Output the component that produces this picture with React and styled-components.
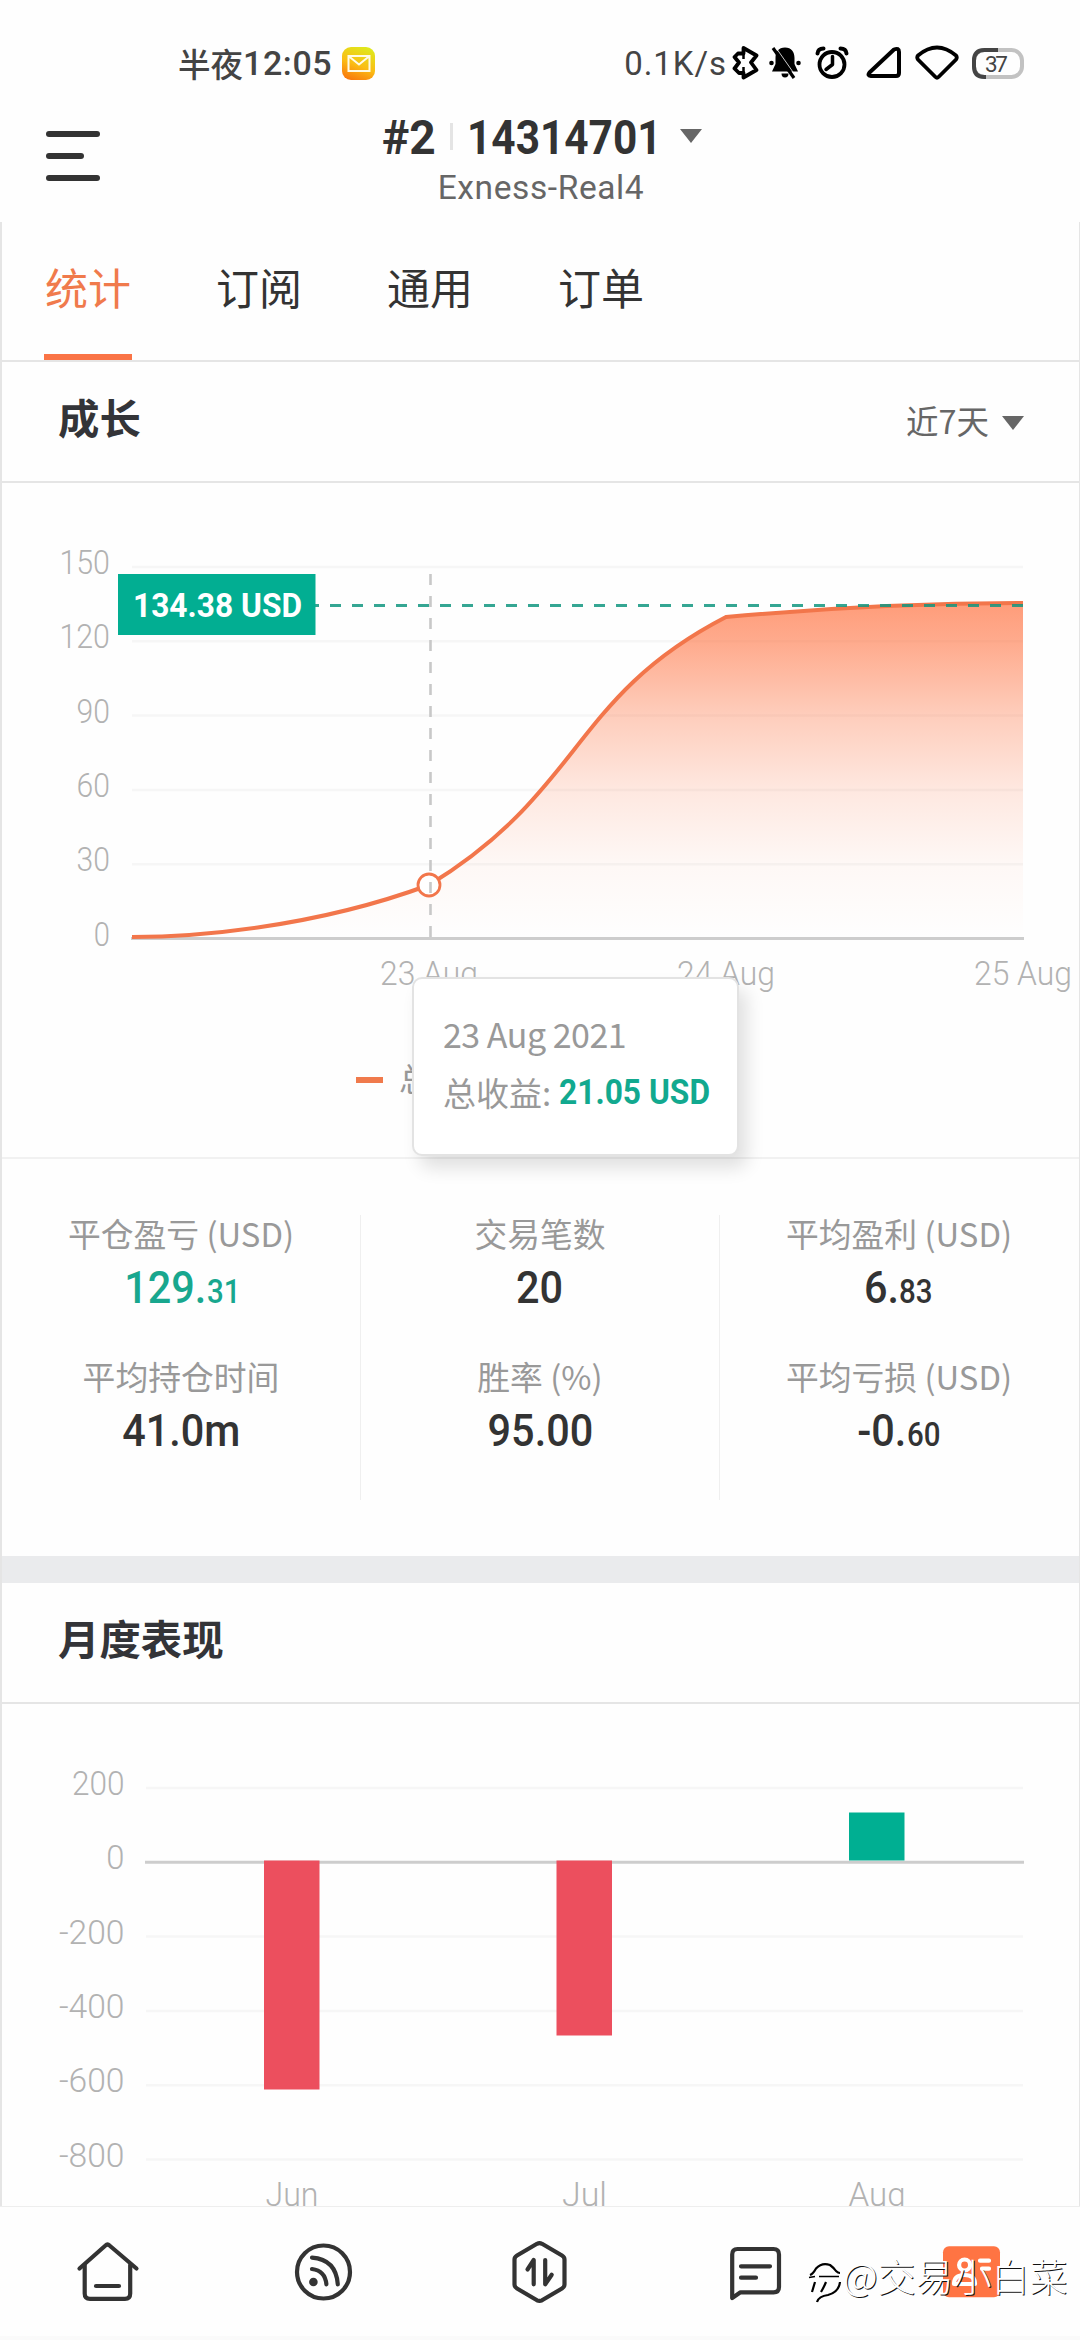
import React from "react";
import styled, { createGlobalStyle } from "styled-components";

const GlobalStyle = createGlobalStyle`
  * {
    box-sizing: border-box;
  }
  body {
    margin: 0;
    background: #fefefe;
    color: #333;
    font-family: Roboto, "Noto Sans CJK SC", sans-serif;
  }
`;

const Screen = styled.div`
  position: relative;
  width: 1080px;
  height: 2340px;
  display: flex;
  flex-direction: column;
  overflow: hidden;
  background: #fefefe;
`;

/* DIN-like look: Roboto squeezed horizontally */
const Din = styled.span`
  display: inline-block;
  white-space: nowrap;
  width: ${(p) => (p.$width ? `${p.$width}px` : "auto")};
  color: ${(p) => p.$color || "inherit"};
  font-family: Roboto, sans-serif;
  font-size: ${(p) => p.$size}px;
  font-weight: ${(p) => p.$weight || 400};
  letter-spacing: ${(p) => p.$spacing || 0}px;
`;

const DinGlyphs = styled.span`
  display: inline-block;
  transform: scaleX(${(p) => p.$squeeze});
  transform-origin: ${(p) => p.$origin};
`;

function Number({ children, squeeze = 1, origin = "center", ...rest }) {
  return (
    <Din {...rest}>
      <DinGlyphs $squeeze={squeeze} $origin={origin}>
        {children}
      </DinGlyphs>
    </Din>
  );
}

const StatusBar = styled.div`
  height: 126px;
  padding: 0 55px 0 178px;
  display: flex;
  align-items: center;
  flex-shrink: 0;
`;

const Clock = styled.div`
  display: flex;
  align-items: center;
  font-family: "Noto Sans CJK SC", sans-serif;
  font-size: 32.5px;
  font-weight: 500;
  line-height: 40px;
  color: #444;
  margin-right: 10px;
`;

const StatusIcons = styled.div`
  display: flex;
  align-items: center;
  margin-left: auto;
`;

const StatusIcon = styled.svg`
  display: block;
  margin-left: ${(p) => p.$gap || 0}px;
`;

const Header = styled.header`
  height: 96px;
  display: grid;
  grid-template-columns: 200px 1fr 200px;
  flex-shrink: 0;
`;

const MenuButton = styled.div`
  display: flex;
  flex-direction: column;
  gap: 16px;
  padding: 5px 0 0 46px;
`;

const MenuLine = styled.div`
  width: ${(p) => p.$width}px;
  height: 6px;
  border-radius: 3px;
  background: #333;
`;

const Account = styled.div`
  display: flex;
  flex-direction: column;
  align-items: center;
`;

const AccountTitle = styled.div`
  display: flex;
  align-items: center;
  align-self: stretch;
  height: 46px;
  margin-top: -12px;
  padding-left: 182px;
`;

const Divider = styled.div`
  width: 3px;
  height: 27px;
  margin: 0 14px 2px 12px;
  background: #e4e4e4;
`;

const Caret = styled.div`
  width: 0;
  height: 0;
  margin-left: ${(p) => p.$gap}px;
  margin-top: ${(p) => p.$drop || 0}px;
  border: 11px solid transparent;
  border-top: 14px solid #666;
  border-bottom: none;
`;

const Server = styled.div`
  height: 46px;
  line-height: 46px;
  margin-top: 5px;
  padding-left: 2px;
  color: #666;
`;

const Panel = styled.main`
  height: 1984px;
  flex-shrink: 0;
  border-left: 2px solid #e5e5e5;
  border-right: 1px solid #e5e5e5;
  overflow: hidden;
`;

const Tabs = styled.nav`
  height: 140px;
  display: flex;
  gap: 83px;
  padding-left: 42px;
  border-bottom: 2px solid #e5e5e5;
`;

const Tab = styled.div`
  height: 138px;
  width: 88px;
  text-align: center;
  line-height: 128px;
  font-size: 43px;
  font-family: "Noto Sans CJK SC", sans-serif;
  color: ${(p) => (p.$active ? "#f07a4c" : "#333")};
  border-bottom: 6px solid ${(p) => (p.$active ? "#fa7446" : "transparent")};
`;

const SectionHeader = styled.div`
  height: 121px;
  display: flex;
  justify-content: space-between;
  align-items: center;
  padding: 0 55px 0 56px;
  border-bottom: 2px solid #e5e5e5;
`;

const SectionTitle = styled.h2`
  margin: 0 0 12px;
  font-family: "Noto Sans CJK SC", sans-serif;
  font-size: 41.4px;
  line-height: 50px;
  font-weight: 700;
  color: #333438;
`;

const RangeSelect = styled.div`
  display: flex;
  align-items: center;
  margin-bottom: 4px;
  font-family: "Noto Sans CJK SC", sans-serif;
  font-size: 32.5px;
  line-height: 40px;
  color: #666;
`;

const ChartSvg = styled.svg`
  display: block;
`;

const AxisText = styled.text`
  font-family: Roboto, sans-serif;
  font-weight: ${(p) => p.$weight || 300};
  font-size: 33.5px;
  fill: ${(p) => p.$color || "#b2b2b2"};
`;

const Legend = styled.div`
  height: 149px;
  display: flex;
  align-items: flex-start;
  gap: 16px;
  padding: 49px 0 0 354px;
  border-bottom: 2px solid #f1f1f1;
  font-family: "Noto Sans CJK SC", sans-serif;
  font-size: 32px;
  line-height: 36px;
  color: #999;
`;

const LegendMark = styled.div`
  width: 27px;
  height: 6px;
  margin-top: 18px;
  background: #f07a4c;
`;

const Tooltip = styled.div`
  position: absolute;
  left: 412px;
  top: 977px;
  width: 327px;
  height: 179px;
  padding: 30px 0 0 29px;
  border: 2px solid #e3e3e3;
  border-radius: 10px;
  background: #fff;
  box-shadow: 8px 12px 18px rgba(0, 0, 0, 0.12);
  font-family: "Noto Sans CJK SC", sans-serif;
  color: #999;
`;

const TooltipRow = styled.div`
  display: flex;
  align-items: center;
  white-space: nowrap;
  height: 50px;
  line-height: 50px;
  margin-bottom: 8px;
  font-size: ${(p) => p.$size || 33}px;
  letter-spacing: ${(p) => p.$spacing || 0}px;
`;

const Stats = styled.section`
  height: 397px;
  padding-top: 56px;
  display: grid;
  grid-template-columns: repeat(3, 1fr);
`;

const StatColumn = styled.div`
  height: 285px;
  border-right: 1px solid ${(p) => (p.$last ? "transparent" : "#efefef")};
`;

const Stat = styled.div`
  height: 143px;
  text-align: center;
`;

const StatLabel = styled.div`
  font-family: "Noto Sans CJK SC", sans-serif;
  font-size: 32.8px;
  line-height: 36px;
  color: #999;
`;

const StatValue = styled.div`
  display: flex;
  justify-content: center;
  align-items: baseline;
  margin-top: 15px;
  height: 44px;
  line-height: 44px;
  color: ${(p) => (p.$profit ? "#18a78e" : "#333")};
`;

const Band = styled.div`
  height: 27px;
  background: #eaebed;
`;

const BottomNav = styled.footer`
  height: 134px;
  flex-shrink: 0;
  display: grid;
  grid-template-columns: repeat(5, 216px);
  align-items: center;
  justify-items: center;
  border-top: 1px solid #eee;
  border-bottom: 4px solid #fafafa;
`;

const NavIcon = styled.svg`
  display: block;
  fill: none;
  stroke: #333;
  stroke-width: 4.2;
  stroke-linecap: round;
  stroke-linejoin: round;
`;

const Watermark = styled.div`
  position: absolute;
  left: 805px;
  top: 2249px;
  display: flex;
  align-items: center;
  height: 50px;
  white-space: nowrap;
  font-family: "Noto Sans CJK SC", sans-serif;
  font-size: 38px;
  font-weight: 300;
  color: #fff;
  text-shadow: 1px 1px 0 #111;
`;

const WatermarkLogo = styled.svg`
  overflow: visible;
  fill: none;
  stroke: #000;
`;

const tabs = ["统计", "订阅", "通用", "订单"];

const stats = [
  [
    { label: "平仓盈亏 (USD)", value: "129.", decimals: "31", profit: true },
    { label: "平均持仓时间", value: "41.0m" },
  ],
  [
    { label: "交易笔数", value: "20" },
    { label: "胜率 (%)", value: "95.00" },
  ],
  [
    { label: "平均盈利 (USD)", value: "6.", decimals: "83" },
    { label: "平均亏损 (USD)", value: "-0.", decimals: "60" },
  ],
];

const growthTicks = [150, 120, 90, 60, 30, 0];
const growthDates = [
  { x: 429, label: "23 Aug" },
  { x: 726, label: "24 Aug" },
  { x: 1023, label: "25 Aug" },
];

const monthTicks = [200, 0, -200, -400, -600, -800];
const months = [
  { x: 292, label: "Jun", width: 51, top: 1861, bottom: 2090, color: "#ec4f5e" },
  { x: 584.5, label: "Jul", width: 43, top: 1861, bottom: 2036, color: "#ec4f5e" },
  { x: 877, label: "Aug", width: 55, top: 1813, bottom: 1861, color: "#00af92" },
];

const curve =
  "M132 937C190 937 310 929 429 885C584 790 571 697 726 617C825 608 925 603 1023 603";

function tickWidth(value) {
  const digits = String(Math.abs(value)).length;
  return digits * 17.2 - 1 + (value < 0 ? 13 : 0);
}

function GrowthChart() {
  return (
    <ChartSvg width="1077" height="527" viewBox="2 483 1077 527">
      <defs>
        <linearGradient id="area" x1="0" y1="603" x2="0" y2="938" gradientUnits="userSpaceOnUse">
          <stop offset="0" stopColor="#ff7443" stopOpacity="0.71" />
          <stop offset="0.12" stopColor="#ff7443" stopOpacity="0.6" />
          <stop offset="0.33" stopColor="#ff7443" stopOpacity="0.36" />
          <stop offset="0.56" stopColor="#ff7443" stopOpacity="0.16" />
          <stop offset="0.78" stopColor="#ff7443" stopOpacity="0.045" />
          <stop offset="1" stopColor="#ff7443" stopOpacity="0" />
        </linearGradient>
      </defs>
      {growthTicks.map((tick, i) => {
        const y = 567 + i * 74.3;
        return (
          <g key={tick}>
            <path
              d={`M${tick ? 132 : 131} ${y}H${tick ? 1023 : 1024}`}
              stroke={tick ? "#f6f6f6" : "#cdcdcd"}
              strokeWidth={tick ? 2.5 : 3}
            />
            <AxisText
              x="110"
              y={y + 7}
              textAnchor="end"
              textLength={tickWidth(tick)}
              lengthAdjust="spacingAndGlyphs"
            >
              {tick}
            </AxisText>
          </g>
        );
      })}
      <path d={`${curve}V938H132Z`} fill="url(#area)" />
      <path d={curve} fill="none" stroke="#f2764b" strokeWidth="4" />
      <circle cx="429" cy="885" r="11" fill="#fff" stroke="#f2764b" strokeWidth="2.8" />
      <path d="M430.5 574V937" stroke="#c8c8c8" strokeWidth="2.6" strokeDasharray="11 11" />
      <path
        d="M308 605.5H1023"
        stroke="#129680"
        strokeOpacity="0.85"
        strokeWidth="3"
        strokeDasharray="11 11"
      />
      <rect x="118" y="574" width="197.5" height="61" fill="#02ae92" />
      <AxisText
        x="133"
        y="616.5"
        textLength="169"
        lengthAdjust="spacingAndGlyphs"
        $color="#fff"
        $weight={700}
      >
        134.38 USD
      </AxisText>
      {growthDates.map((d) => (
        <AxisText
          key={d.label}
          x={d.x}
          y="985"
          textAnchor="middle"
          textLength="98"
          lengthAdjust="spacingAndGlyphs"
        >
          {d.label}
        </AxisText>
      ))}
    </ChartSvg>
  );
}

function MonthChart() {
  return (
    <ChartSvg width="1077" height="502" viewBox="2 1704 1077 502">
      {monthTicks.map((tick, i) => {
        const y = 1788 + i * 74.3;
        return (
          <g key={tick}>
            <path
              d={`M${tick ? 146 : 145} ${y}H${tick ? 1023 : 1024}`}
              stroke={tick ? "#f6f6f6" : "#cdcdcd"}
              strokeWidth={tick ? 2.5 : 3}
            />
            <AxisText
              x="124.500"
              y={y + 7}
              textAnchor="end"
              textLength={tickWidth(tick) + 2}
              lengthAdjust="spacingAndGlyphs"
            >
              {tick}
            </AxisText>
          </g>
        );
      })}
      {months.map((m) => (
        <g key={m.label}>
          <rect x={m.x - 28} y={m.top - 0.5} width="55.5" height={m.bottom - m.top} fill={m.color} />
          <AxisText
            x={m.x}
            y="2206"
            textAnchor="middle"
            textLength={m.width + 2}
            lengthAdjust="spacingAndGlyphs"
          >
            {m.label}
          </AxisText>
        </g>
      ))}
    </ChartSvg>
  );
}

function StatusIconRow() {
  return (
    <StatusIcons>
      <Number $size={34} $spacing={1} $color="#444" squeeze={0.97} origin="right">
        0.1K/s
      </Number>
      {/* bluetooth */}
      <StatusIcon $gap={5} width="28" height="34" viewBox="0 0 28 34" fill="none" stroke="#000" strokeWidth="3.8" strokeLinejoin="round">
        <path d="M11.5 2L24.5 9.5L19 16.5L24.5 24L11.5 31.5V27H7L2.5 22.5L7 16.5L2.5 11L6 7.5H11.5Z" />
        <path d="M11.5 8V13M11.5 21V27" strokeWidth="2.5" />
      </StatusIcon>
      {/* muted bell */}
      <StatusIcon $gap={9} width="32" height="34" viewBox="0 0 32 34">
        <path d="M16 1.5C9.5 1.5 6.5 6 6.5 12V18L3 25.5H29L25.5 18V12C25.5 6 22.5 1.5 16 1.5Z" />
        <path d="M12.5 27.5H19.5A3.5 4 0 0 1 12.5 27.5Z" />
        <circle cx="2.5" cy="17" r="2.3" />
        <circle cx="29.5" cy="17" r="2.3" />
        <path d="M4 2L25 32" stroke="#000" strokeWidth="3.2" />
        <path d="M7.5 2.5L27.5 31" stroke="#fff" strokeWidth="0.8" />
      </StatusIcon>
      {/* alarm */}
      <StatusIcon $gap={14} width="34" height="34" viewBox="0 0 34 34" fill="none" stroke="#000">
        <circle cx="17" cy="18.5" r="12.5" strokeWidth="3.8" />
        <path d="M17.5 10.5V18.5L11 23.5" strokeWidth="3.5" strokeLinecap="round" strokeLinejoin="round" />
        <path d="M2.5 7.5Q3 2.5 8.5 2.5M31.5 7.5Q31 2.5 25.5 2.5" strokeWidth="4" strokeLinecap="round" />
      </StatusIcon>
      {/* signal */}
      <StatusIcon $gap={17} width="36" height="34" viewBox="0 0 36 34" fill="none" stroke="#000" strokeWidth="4">
        <path d="M28 3.5Q33 1.500 33 6V27Q33 30 30 30H5Q1 29.5 3.5 26.5Z" strokeLinejoin="round" />
      </StatusIcon>
      {/* wifi */}
      <StatusIcon $gap={13} width="44" height="36" viewBox="0 0 44 36" fill="none" stroke="#000" strokeWidth="3.8">
        <path d="M3 10.5Q22 -5.5 41 10.5Q42.5 12.5 41 14.5L23.5 32Q22 33.5 20.5 32L3 14.5Q1.5 12.5 3 10.5Z" />
      </StatusIcon>
      {/* battery */}
      <StatusIcon $gap={12} width="54" height="32" viewBox="0 0 54 32" fill="none" strokeWidth="4">
        <rect x="3" y="3" width="48" height="27" rx="10.5" stroke="#c2c2c2" />
        <path d="M27 3H13.5Q3 3 3 13.5V19.5Q3 30 13.5 30H15" stroke="#444" />
        <text
          x="14"
          y="24.5"
          fill="#444"
          fontFamily="Roboto, sans-serif"
          fontSize="22.5"
          textLength="23"
        >
          37
        </text>
      </StatusIcon>
    </StatusIcons>
  );
}

function App() {
  return (
    <>
      <GlobalStyle />
      <Screen>
        <StatusBar>
          <Clock>
            半夜
            <Number $size={34} $weight={500} $spacing={0.6}>
              12:05
            </Number>
          </Clock>
          <svg width="33" height="33" viewBox="0 0 33 33">
            <defs>
              <linearGradient id="mail" x1="0.7" y1="0" x2="0.3" y2="1">
                <stop offset="0" stopColor="#dfe81c" />
                <stop offset="0.55" stopColor="#fbbd14" />
                <stop offset="1" stopColor="#f97b0d" />
              </linearGradient>
            </defs>
            <rect width="33" height="33" rx="9" fill="url(#mail)" />
            <path d="M6.5 9H27.5V24H6.5ZM6.5 9L17 17.5L27.5 9" fill="none" stroke="#fffbe6" strokeWidth="2" />
          </svg>
          <StatusIconRow />
        </StatusBar>

        <Header>
          <MenuButton>
            <MenuLine $width={54} />
            <MenuLine $width={38} />
            <MenuLine $width={54} />
          </MenuButton>
          <Account>
            <AccountTitle>
              <Number $size={49} $weight={700} $width={56} squeeze={0.94} origin="left">
                #2
              </Number>
              <Divider />
              <Number $size={49} $weight={700} $width={196} squeeze={0.865} origin="left">
                14314701
              </Number>
              <Caret $gap={17} $drop={-2} />
            </AccountTitle>
            <Server>
              <Number $size={33.5} $spacing={0.6}>Exness-Real4</Number>
            </Server>
          </Account>
        </Header>

        <Panel>
          <Tabs>
            {tabs.map((tab, i) => (
              <Tab key={tab} $active={i === 0}>
                {tab}
              </Tab>
            ))}
          </Tabs>

          <SectionHeader>
            <SectionTitle>成长</SectionTitle>
            <RangeSelect>
              近7天
              <Caret $gap={13} $drop={6} />
            </RangeSelect>
          </SectionHeader>
          <GrowthChart />
          <Legend>
            <LegendMark />
            总收益
          </Legend>

          <Stats>
            {stats.map((column, i) => (
              <StatColumn key={i} $last={i === stats.length - 1}>
                {column.map((stat) => (
                  <Stat key={stat.label}>
                    <StatLabel>{stat.label}</StatLabel>
                    <StatValue $profit={stat.profit}>
                      <Number
                        $size={45}
                        $weight={500}
                        squeeze={0.92}
                        origin={stat.decimals ? "right" : "center"}
                      >
                        {stat.value}
                      </Number>
                      {stat.decimals && (
                        <Number $size={33.5} $weight={500} squeeze={0.88} origin="left">
                          {stat.decimals}
                        </Number>
                      )}
                    </StatValue>
                  </Stat>
                ))}
              </StatColumn>
            ))}
          </Stats>

          <Band />
          <SectionHeader>
            <SectionTitle>月度表现</SectionTitle>
          </SectionHeader>
          <MonthChart />
        </Panel>

        <BottomNav>
          <NavIcon width="72" height="72" viewBox="0 0 72 72">
            <path d="M7.5 32.5L33.5 9.5Q35.5 7.5 37.5 9.5L64.5 32.5" />
            <path d="M12.7 29V57.5Q12.7 62.8 18 62.8H53Q58.2 62.8 58.2 57.5V29" />
            <path d="M24 50H47" />
          </NavIcon>
          <NavIcon width="72" height="72" viewBox="0 0 72 72">
            <circle cx="35.5" cy="36" r="26.5" />
            <path d="M24 21.7Q48 23.5 49.8 48.3M24 33Q37 34.5 38.4 48.3" />
            <circle cx="25.4" cy="46" r="4.3" fill="#333" stroke="none" />
          </NavIcon>
          <NavIcon width="72" height="72" viewBox="0 0 72 72">
            <path d="M33 7.8Q35.5 6.5 38 7.8L58 19.5Q60.5 21 60.5 23.5V48.5Q60.5 51 58 52.5L38 64.3Q35.5 65.5 33 64.3L13 52.5Q10.5 51 10.5 48.5V23.5Q10.5 21 13 19.5Z" />
            <path d="M23.5 33.5L29.7 24V48.3M47.7 38.7L41.2 48.3V24" />
          </NavIcon>
          <NavIcon width="72" height="72" viewBox="0 0 72 72">
            <path d="M12.2 62V18.5Q12.2 13 17.5 13H53.5Q59 13 59 18.5V51Q59 56.3 53.5 56.3H20.5Z" />
            <path d="M21 30.3H50M21 41.7H36" />
          </NavIcon>
          <NavIcon width="72" height="72" viewBox="0 0 72 72">
            <rect x="7" y="10.3" width="57" height="51" rx="6" fill="#ff7443" stroke="none" />
            <g stroke="#fff">
              <circle cx="28.6" cy="29" r="5.5" />
              <path d="M18 48Q18 39 28.6 39Q39 39 39 48ZM44 24.7H53M46 32.7H53" />
            </g>
          </NavIcon>
        </BottomNav>

        <Tooltip>
          <TooltipRow $size={34} $spacing={-0.5}>23 Aug 2021</TooltipRow>
          <TooltipRow>
            总收益:&nbsp;
            <Number $size={34.5} $weight={700} $color="#12a98f" squeeze={0.92} origin="left">
              21.05 USD
            </Number>
          </TooltipRow>
        </Tooltip>

        <Watermark>
          <WatermarkLogo width="38" height="50" viewBox="0 0 38 50">
            <path d="M5 26Q8 25 11 19.500Q17 13 25 16Q29 19 31 22Q33 24 35 24" strokeWidth="2.2" />
            <path d="M4 28.5L10 27.5M14 27.5H34" strokeWidth="1.6" />
            <path d="M10 33L7 43M21 33Q19 38 16 43M35 33Q34 43 23 46Q14 47 12 53" strokeWidth="2.2" />
          </WatermarkLogo>
          @交易小白菜
        </Watermark>
      </Screen>
    </>
  );
}

export default App;
